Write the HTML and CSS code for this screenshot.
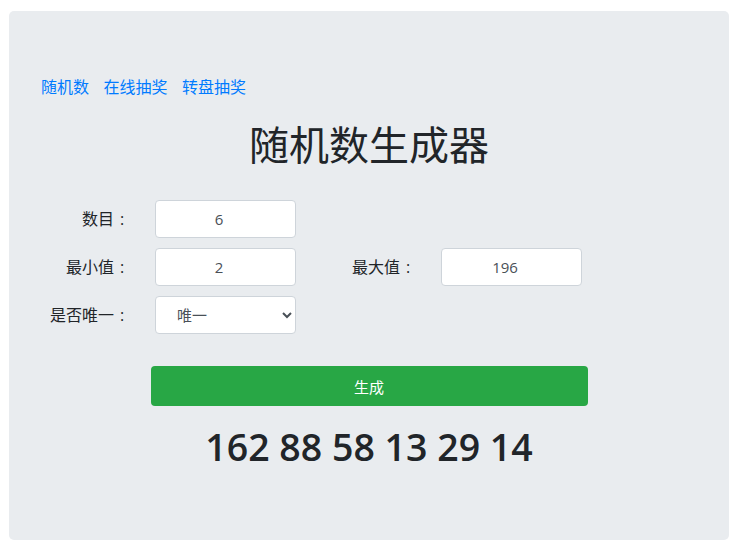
FILE: index.html
```html
<!DOCTYPE html>
<html lang="zh-CN">
<head>
  <meta charset="UTF-8">
  <meta name="viewport" content="width=device-width, initial-scale=1.0">
  <title>随机数生成器</title>
  <link rel="stylesheet" href="styles.css">
</head>
<body>
  <div class="jumbotron">
    <nav class="links">
      <a href="#">随机数</a>
      <a href="#">在线抽奖</a>
      <a href="#">转盘抽奖</a>
    </nav>
    <h1>随机数生成器</h1>

    <form class="form-grid">
      <label for="count">数目<span class="colon">:</span></label>
      <input id="count" type="text" value="6">
      <span></span>
      <span></span>

      <label for="min">最小值<span class="colon">:</span></label>
      <input id="min" type="text" value="2">
      <label for="max">最大值<span class="colon">:</span></label>
      <input id="max" type="text" value="196">

      <label for="unique">是否唯一<span class="colon">:</span></label>
      <select id="unique">
        <option>唯一</option>
        <option>不唯一</option>
      </select>
    </form>

    <button class="btn-generate" type="button">生成</button>
    <div class="result">162 88 58 13 29 14</div>
  </div>
</body>
</html>
```

FILE: styles.css
```css
body {
  margin: 11px 11px 0 9px;
  font-family: "Segoe UI", "Open Sans", "Noto Sans CJK SC", sans-serif;
  font-size: 16px;
  line-height: 1.5;
  color: #212529;
  background: #fff;
}
.jumbotron {
  background-color: #e9ecef;
  border-radius: 5px;
  padding: 64px 32px 71px;
}
.links {
  display: flex;
  gap: 14.5px;
}
.links a {
  color: #007bff;
  text-decoration: none;
}
h1 {
  margin: 22px 0 31px;
  font-size: 40px;
  font-weight: 400;
  line-height: 1.2;
  text-align: center;
}
.form-grid {
  display: grid;
  grid-template-columns: 84px 141px 85px 141px;
  column-gap: 30px;
  row-gap: 10px;
  align-items: center;
}
.form-grid label {
  margin-right: -5px;
  text-align: right;
  white-space: nowrap;
}
.colon {
  display: inline-block;
  width: 16px;
  text-align: center;
}
.form-grid input,
.form-grid select {
  box-sizing: border-box;
  height: 38px;
  width: 100%;
  padding: 6px 25px 6px 12px;
  font-family: inherit;
  font-size: 15px;
  color: #495057;
  background: #fff;
  border: 1px solid #ced4da;
  border-radius: 4px;
}
.form-grid input {
  text-align: center;
}
.form-grid select {
  padding: 6px 8px 6px 17px;
}
.btn-generate {
  display: block;
  width: 437px;
  height: 40px;
  margin: 32px auto 0;
  font-family: inherit;
  font-size: 15px;
  color: #fff;
  background-color: #28a745;
  border: none;
  border-radius: 4px;
}
.result {
  margin-top: 18px;
  text-align: center;
  font-size: 37.5px;
  font-weight: 600;
  line-height: 1.2;
}
```
